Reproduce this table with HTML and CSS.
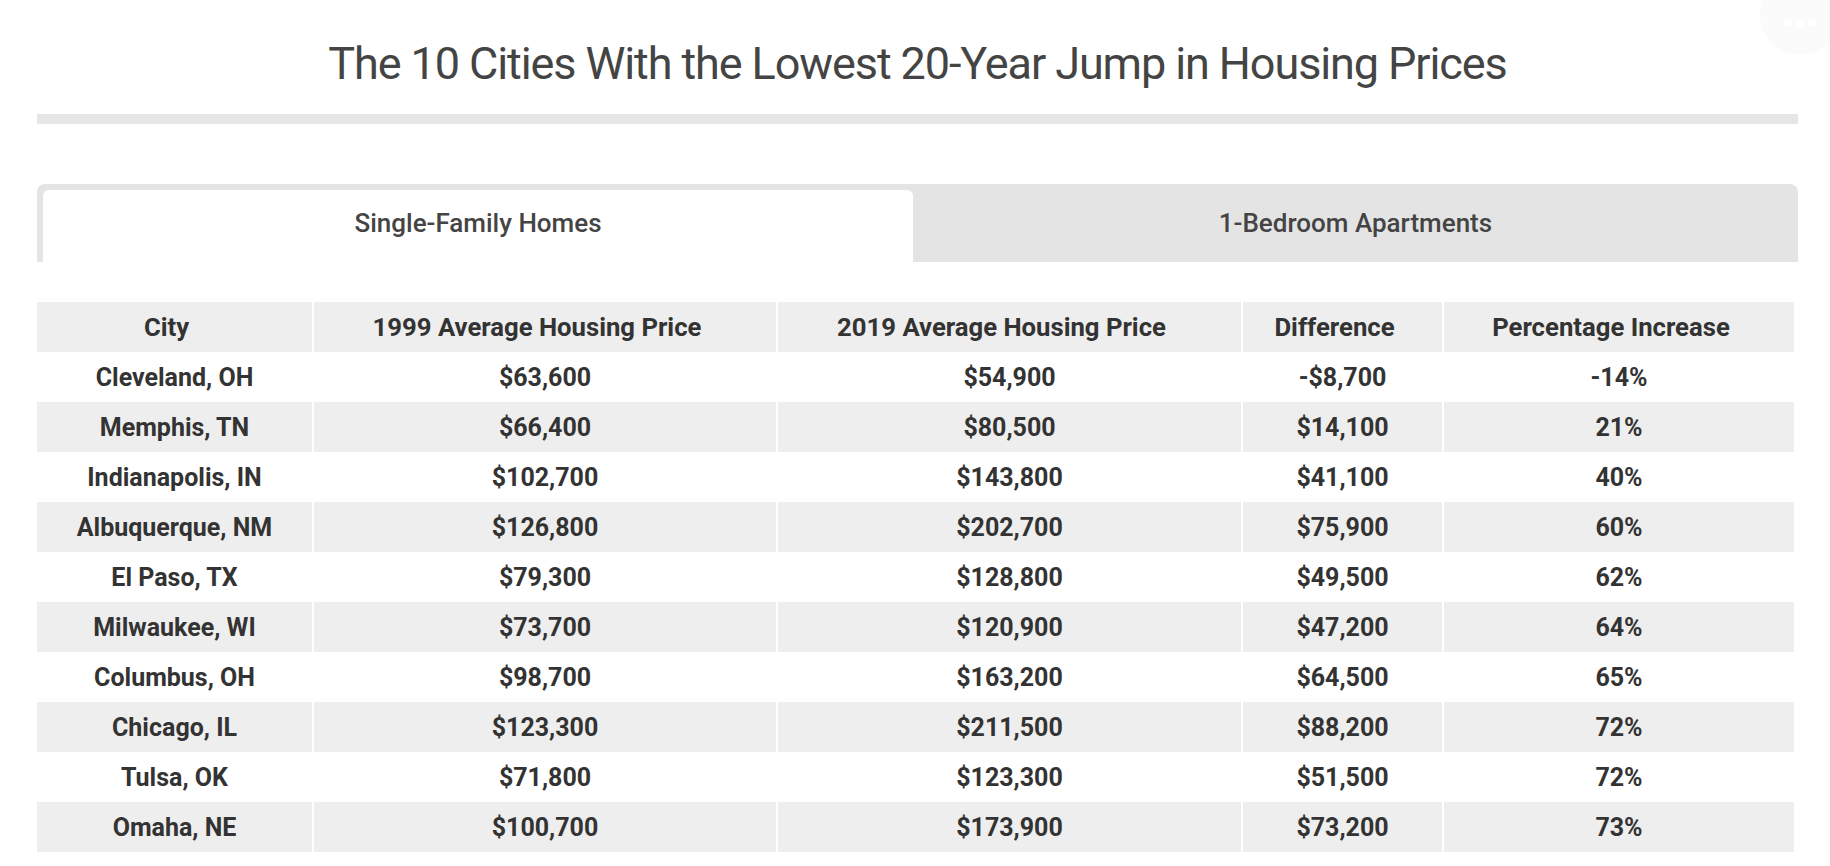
FILE: index.html
```html
<!DOCTYPE html>
<html lang="en">
<head>
<meta charset="utf-8">
<title>Housing Prices</title>
<link rel="stylesheet" href="styles.css">
</head>
<body>
<div class="page">
  <h1 class="title">The 10 Cities With the Lowest 20-Year Jump in Housing Prices</h1>
  <div class="rule"></div>
  <div class="tabs">
    <div class="tab tab-active">Single-Family Homes</div>
    <div class="tab">1-Bedroom Apartments</div>
  </div>
  <table class="data">
    <colgroup>
      <col class="c1"><col class="c2"><col class="c3"><col class="c4"><col class="c5">
    </colgroup>
    <thead>
      <tr><th>City</th><th>1999 Average Housing Price</th><th>2019 Average Housing Price</th><th>Difference</th><th>Percentage Increase</th></tr>
    </thead>
    <tbody>
      <tr><td>Cleveland, OH</td><td>$63,600</td><td>$54,900</td><td>-$8,700</td><td>-14%</td></tr>
      <tr><td>Memphis, TN</td><td>$66,400</td><td>$80,500</td><td>$14,100</td><td>21%</td></tr>
      <tr><td>Indianapolis, IN</td><td>$102,700</td><td>$143,800</td><td>$41,100</td><td>40%</td></tr>
      <tr><td>Albuquerque, NM</td><td>$126,800</td><td>$202,700</td><td>$75,900</td><td>60%</td></tr>
      <tr><td>El Paso, TX</td><td>$79,300</td><td>$128,800</td><td>$49,500</td><td>62%</td></tr>
      <tr><td>Milwaukee, WI</td><td>$73,700</td><td>$120,900</td><td>$47,200</td><td>64%</td></tr>
      <tr><td>Columbus, OH</td><td>$98,700</td><td>$163,200</td><td>$64,500</td><td>65%</td></tr>
      <tr><td>Chicago, IL</td><td>$123,300</td><td>$211,500</td><td>$88,200</td><td>72%</td></tr>
      <tr><td>Tulsa, OK</td><td>$71,800</td><td>$123,300</td><td>$51,500</td><td>72%</td></tr>
      <tr><td>Omaha, NE</td><td>$100,700</td><td>$173,900</td><td>$73,200</td><td>73%</td></tr>
    </tbody>
  </table>
</div>
<div class="more" aria-label="More options"><span></span><span></span><span></span></div>
</body>
</html>
```
FILE: styles.css
```css
html, body {
  margin: 0;
  padding: 0;
  background: #ffffff;
}
body {
  font-family: Roboto, "Liberation Sans", Arial, sans-serif;
  color: #333333;
  overflow: hidden;
}
.page {
  width: 1761px;
  margin-left: 37px;
}
.title {
  margin: 0;
  padding-top: 37px;
  font-size: 45px;
  line-height: 54px;
  font-weight: 400;
  letter-spacing: -1.1px;
  color: #444444;
  text-align: center;
}
.rule {
  margin-top: 23px;
  height: 10px;
  background: #e6e6e6;
}
.tabs {
  margin-top: 60px;
  height: 78px;
  box-sizing: border-box;
  padding: 6px 0 0 6px;
  display: flex;
  background: #e4e4e4;
  border-radius: 8px 8px 0 0;
}
.tab {
  flex: 1;
  display: flex;
  align-items: center;
  justify-content: center;
  padding-bottom: 6px;
  font-size: 26px;
  font-weight: 500;
  color: #444444;
}
.tab-active {
  flex: 0 0 870px;
  background: #ffffff;
  border-radius: 6px 6px 0 0;
}
.data {
  margin-top: 40px;
  width: 1757px;
  table-layout: fixed;
  border-collapse: separate;
  border-spacing: 0;
  font-size: 25px;
  font-weight: 700;
  color: #333333;
}
.c1 { width: 277px; }
.c2 { width: 464px; }
.c3 { width: 465px; }
.c4 { width: 201px; }
.c5 { width: 350px; }
.data th,
.data td {
  height: 50px;
  padding: 0;
  text-align: center;
  vertical-align: middle;
  border-right: 2px solid #ffffff;
  box-sizing: border-box;
  font-weight: 700;
}
.data th {
  font-size: 25.7px;
  padding-right: 16px;
}
.data th:last-child,
.data td:last-child {
  border-right: 0;
}
.data thead tr,
.data tbody tr:nth-child(even) {
  background: #eeeeee;
}
.more {
  position: absolute;
  top: -25px;
  left: 1760px;
  width: 80px;
  height: 80px;
  border-radius: 50%;
  background: #fbfbfb;
  display: flex;
  align-items: center;
  justify-content: center;
  gap: 4px;
  padding-top: 16px;
  box-sizing: border-box;
}
.more span {
  width: 8px;
  height: 8px;
  border-radius: 50%;
  background: #ffffff;
}
```
